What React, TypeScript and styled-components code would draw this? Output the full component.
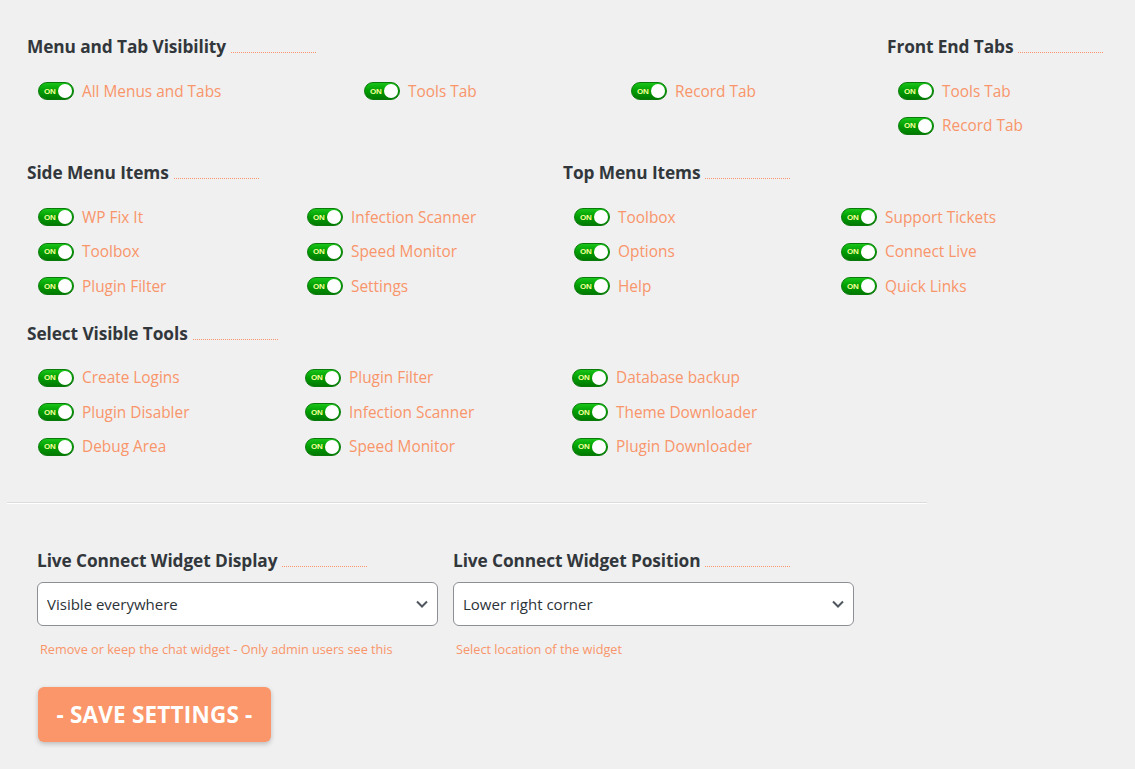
import React from "react";
import styled, { createGlobalStyle } from "styled-components";

const Global = createGlobalStyle`
  html, body { margin: 0; padding: 0; background: #f0f0f0; }
  body { font-family: "Open Sans", "Noto Sans", "Liberation Sans", sans-serif; color: #32373c; }
  * { box-sizing: border-box; }
`;

const ORANGE = "#f9956a";

const Page = styled.div`
  width: 1135px;
  min-height: 769px;
  padding: 35px 0 0 27px;
`;

const Row = styled.div`
  display: flex;
  align-items: flex-start;
`;

const Section = styled.section<{ $w?: number }>`
  width: ${(p) => (p.$w ? `${p.$w}px` : "auto")};
  margin-bottom: 18px;
`;

const Heading = styled.h3`
  display: flex;
  align-items: baseline;
  margin: 0 0 15px;
  font-size: 17.3px;
  line-height: 24px;
  font-weight: 700;
  color: #32373c;
  letter-spacing: -0.1px;
  &::after {
    content: "";
    display: inline-block;
    width: 85px;
    height: 0;
    margin-left: 5px;
    border-bottom: 1px dotted ${ORANGE};
  }
`;

const Grid = styled.div<{ $cols: string }>`
  display: grid;
  grid-template-columns: ${(p) => p.$cols};
  padding-left: 11px;
`;

const Item = styled.label`
  display: flex;
  align-items: center;
  height: 34.5px;
  gap: 8px;
  font-size: 15.4px;
  font-weight: 500;
  color: ${ORANGE};
  white-space: nowrap;
`;

const Toggle = styled.span`
  position: relative;
  display: inline-flex;
  align-items: center;
  width: 36px;
  height: 18px;
  border-radius: 9px;
  border: 1px solid #0a7a0a;
  background: linear-gradient(180deg, #19c419 0%, #02a002 45%, #017a01 100%);
  flex: none;
`;

const OnText = styled.span`
  font-family: "Liberation Sans", Arial, sans-serif;
  font-size: 8px;
  font-weight: 700;
  color: #f4ff9a;
  margin-left: 5px;
  letter-spacing: -0.2px;
`;

const Knob = styled.span`
  position: absolute;
  right: 1px;
  top: 1px;
  width: 14px;
  height: 14px;
  border-radius: 50%;
  background: #ffffff;
`;

const Separator = styled.hr`
  width: 920px;
  margin: 38px 0 0 -20px;
  border: 0;
  border-top: 1px solid #dcdcde;
  border-bottom: 1px solid #ffffff;
`;

const Fields = styled.div`
  display: flex;
  gap: 15px;
  padding: 45px 0 0 10px;
`;

const Field = styled.div`
  width: 401px;
  display: flex;
  flex-direction: column;
`;

const FieldHeading = styled(Heading)`
  margin-bottom: 9px;
`;

const SelectWrap = styled.div`
  position: relative;
  width: 401px;
`;

const Select = styled.select`
  appearance: none;
  -webkit-appearance: none;
  width: 100%;
  height: 44px;
  padding: 0 30px 0 9px;
  border: 1px solid #8c8f94;
  border-radius: 6px;
  background: #ffffff;
  font-family: "Open Sans", "Noto Sans", sans-serif;
  font-size: 15px;
  color: #2c3338;
  outline: none;
`;

const Chevron = styled.svg`
  position: absolute;
  right: 9px;
  top: 17px;
  pointer-events: none;
`;

const Help = styled.p`
  margin: 14px 0 0 3px;
  font-size: 12.7px;
  color: ${ORANGE};
`;

const SaveButton = styled.button`
  margin: 29px 0 0 11px;
  width: 233px;
  height: 55px;
  border: 0;
  border-radius: 6px;
  background: #fa9669;
  color: #ffffff;
  font-family: "Open Sans", "Noto Sans", sans-serif;
  font-size: 22.5px;
  font-weight: 700;
  letter-spacing: 0.2px;
  box-shadow: 0 2px 5px rgba(0, 0, 0, 0.22);
  cursor: pointer;
`;

const Switch = ({ label }: { label: string }) => (
  <Item>
    <Toggle>
      <OnText>ON</OnText>
      <Knob />
    </Toggle>
    {label}
  </Item>
);

const SelectField = ({
  title,
  value,
  help,
}: {
  title: string;
  value: string;
  help: string;
}) => (
  <Field>
    <FieldHeading>{title}</FieldHeading>
    <SelectWrap>
      <Select defaultValue={value}>
        <option>{value}</option>
      </Select>
      <Chevron width="14" height="10" viewBox="0 0 14 10">
        <path d="M2 2.5 L7 7.5 L12 2.5" fill="none" stroke="#50575e" strokeWidth="2" />
      </Chevron>
    </SelectWrap>
    <Help>{help}</Help>
  </Field>
);

export default function App() {
  return (
    <>
      <Global />
      <Page>
        <Row>
          <Section $w={860}>
            <Heading>Menu and Tab Visibility</Heading>
            <Grid $cols="326px 267px 1fr">
              <Switch label="All Menus and Tabs" />
              <Switch label="Tools Tab" />
              <Switch label="Record Tab" />
            </Grid>
          </Section>
          <Section>
            <Heading>Front End Tabs</Heading>
            <Grid $cols="1fr">
              <Switch label="Tools Tab" />
              <Switch label="Record Tab" />
            </Grid>
          </Section>
        </Row>
        <Row>
          <Section $w={536}>
            <Heading>Side Menu Items</Heading>
            <Grid $cols="269px 1fr">
              <Switch label="WP Fix It" />
              <Switch label="Infection Scanner" />
              <Switch label="Toolbox" />
              <Switch label="Speed Monitor" />
              <Switch label="Plugin Filter" />
              <Switch label="Settings" />
            </Grid>
          </Section>
          <Section>
            <Heading>Top Menu Items</Heading>
            <Grid $cols="267px 1fr">
              <Switch label="Toolbox" />
              <Switch label="Support Tickets" />
              <Switch label="Options" />
              <Switch label="Connect Live" />
              <Switch label="Help" />
              <Switch label="Quick Links" />
            </Grid>
          </Section>
        </Row>
        <Section>
          <Heading>Select Visible Tools</Heading>
          <Grid $cols="267px 267px 1fr">
            <Switch label="Create Logins" />
            <Switch label="Plugin Filter" />
            <Switch label="Database backup" />
            <Switch label="Plugin Disabler" />
            <Switch label="Infection Scanner" />
            <Switch label="Theme Downloader" />
            <Switch label="Debug Area" />
            <Switch label="Speed Monitor" />
            <Switch label="Plugin Downloader" />
          </Grid>
        </Section>
        <Separator />
        <Fields>
          <SelectField
            title="Live Connect Widget Display"
            value="Visible everywhere"
            help="Remove or keep the chat widget - Only admin users see this"
          />
          <SelectField
            title="Live Connect Widget Position"
            value="Lower right corner"
            help="Select location of the widget"
          />
        </Fields>
        <SaveButton>- SAVE SETTINGS -</SaveButton>
      </Page>
    </>
  );
}
